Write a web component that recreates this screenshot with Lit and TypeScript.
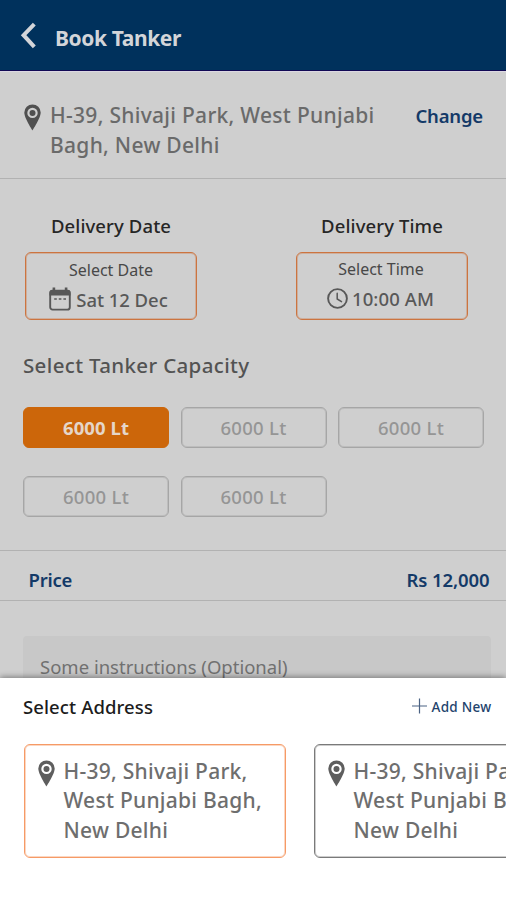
import { LitElement, html, css } from "lit";
import { customElement, property } from "lit/decorators.js";

const pin = html`<svg class="pin" width="17" height="27" viewBox="0 0 17 27">
  <path fill="currentColor" fill-rule="evenodd" d="M8.500 .4A8.2 8.2 0 0 0 .3 8.600C.3 14.200 8.500 26.400 8.500 26.400S16.700 14.200 16.700 8.600A8.2 8.2 0 0 0 8.500 .4ZM8.500 3.700a5.200 5.200 0 1 1 0 10.400a5.200 5.200 0 0 1 0-10.400Z"/>
  <circle cx="8.500" cy="8.900" r="3" fill="currentColor"/>
</svg>`;

const calendar = html`<svg width="22" height="24" viewBox="0 0 22 24">
  <rect x="1.200" y="4" width="19.600" height="18.600" rx="2.400" fill="none" stroke="currentColor" stroke-width="1.900"/>
  <path fill="currentColor" d="M.5 8.500V5.500Q.5 2.800 3.200 2.800H3.600V.5h2.600V2.800h9.600V.5H18.400V2.800h.4Q21.500 2.800 21.500 5.500V8.500Z"/>
  <path stroke="currentColor" stroke-width="1.600" stroke-dasharray="2.600 2" d="M5.200 12h12"/>
</svg>`;

const clock = html`<svg width="21" height="21" viewBox="0 0 21 21" fill="none" stroke="currentColor" stroke-linecap="round">
  <circle cx="10.500" cy="10.500" r="9.400" stroke-width="1.900"/>
  <path stroke-width="1.500" d="M10.200 5.200v5.800l4.300 2.600"/>
</svg>`;

@customElement("address-card")
class AddressCard extends LitElement {
  @property({ type: Boolean, reflect: true }) selected = false;
  static styles = css`
    :host { display: flex; box-sizing: border-box; flex: none; width: 262px; height: 114px; padding: 11.5px 0 0 12.5px;
      border: 1px solid #7a7a7a; border-radius: 6px; color: #6e6e6e; box-shadow: inset 0 0 0 1px rgba(112, 112, 112, .35); }
    :host([selected]) { border-color: #f69a66; box-shadow: inset 0 0 0 1px rgba(246, 154, 102, .4); }
    .pin { flex: none; margin: 3px 9px 0 0; color: #5e5e5e; }
    .text { font-size: 21px; font-weight: 500; line-height: 29.5px; letter-spacing: .26px; white-space: nowrap; }
  `;
  render() {
    return html`${pin}<div class="text">H-39, Shivaji Park,<br>West Punjabi Bagh,<br>New Delhi</div>`;
  }
}

@customElement("app-root")
class AppRoot extends LitElement {
  static styles = css`
    :host { display: flex; flex-direction: column; width: 506px; height: 900px; overflow: hidden; background: #fff;
      font-family: "Noto Sans", "Open Sans", sans-serif; font-weight: 500; white-space: nowrap; }
    .page { height: 678px; flex: none; overflow: hidden; background: #cfcfcf; }
    header { display: flex; align-items: center; height: 71px; box-sizing: border-box; padding: 3px 0 0 20px;
      background: #00315c; border-bottom: 1px solid #120a54; color: #d3d5d9; }
    .back { margin: -2px 18px 0 0; }
    .title { font-size: 21px; font-weight: 700; letter-spacing: -.39px; line-height: 30px; padding-top: 2px; }
    .place { display: flex; box-sizing: border-box; height: 108px; padding: 29px 0 0 24px; border-top: 1px solid #dcd8e2;
      border-bottom: 1px solid #b2b2b2; color: #6a6a6a; }
    .place .pin { margin: 3px 9px 0 0; color: #505050; }
    .where { width: 365.5px; font-size: 21px; line-height: 29.5px; letter-spacing: .29px; }
    .change { font-size: 18.5px; font-weight: 600; line-height: 30px; letter-spacing: -.19px; color: #143a68; }
    .slots { display: flex; justify-content: space-between; padding: 35px 38px 0 25px; }
    .slot { width: 172px; text-align: center; }
    .label { font-size: 18.5px; line-height: 24px; letter-spacing: .11px; color: #262626; margin-bottom: 14px; }
    .pick { box-sizing: border-box; height: 68px; border: 1px solid #cc7440; border-radius: 6px; padding-top: 7px;
      box-shadow: inset 0 0 0 1px rgba(204, 116, 64, .35); }
    .pick.time { padding-top: 6px; }
    .hint { font-size: 16px; font-weight: 400; line-height: 20px; color: #484848; }
    .time .hint { padding-right: 2px; }
    .value { display: flex; align-items: center; justify-content: center; gap: 5px; height: 24px; margin-top: 7px;
      font-size: 18.5px; color: #585858; letter-spacing: -.05px; padding-right: 5px; }
    .time .value { gap: 4px; letter-spacing: .09px; padding-right: 3px; }
    .heading { padding: 31px 0 0 23px; font-size: 20.5px; line-height: 28px; letter-spacing: .35px; color: #535353; }
    .sizes { display: grid; grid-template-columns: repeat(3, 146px); gap: 27.5px 11.500px; padding: 28px 0 0 23px; }
    .size { box-sizing: border-box; height: 41px; border: 1px solid #a6a6a6; border-radius: 6px; color: #959595;
      font-size: 18.5px; line-height: 39px; text-align: center; letter-spacing: .27px; box-shadow: inset 0 0 0 1px rgba(150, 150, 150, .3); }
    .size.on { background: #cc660a; border-color: #cc660a; color: #e5d6c9; font-weight: 700; letter-spacing: .07px; box-shadow: none; }
    .price { display: flex; justify-content: space-between; box-sizing: border-box; height: 51px; margin-top: 33px; padding: 16px 16.5px 0 28.5px;
      border-top: 1px solid #b2b2b2; border-bottom: 1px solid #b2b2b2; font-size: 18.5px; font-weight: 600; line-height: 26px; color: #143a68; }
    .price .name { letter-spacing: -.25px; }
    .price .sum { letter-spacing: -.1px; }
    .note { margin: 35px 15px 0 23px; height: 80px; padding: 17px 0 0 17px; border-radius: 4px; background: #c8c8c8;
      font-size: 18.5px; font-weight: 400; line-height: 28px; color: #717171; }
    .sheet { position: relative; flex: 1; background: #fff; box-shadow: 0 -1px 6px rgba(0, 0, 0, .42); }
    .bar { display: flex; justify-content: space-between; align-items: center; height: 28px; padding: 14px 14.5px 0 23px; }
    .caption { font-size: 18.5px; letter-spacing: .11px; color: #1c1c1c; }
    .add { display: flex; align-items: center; gap: 4.5px; padding-top: 1px; font-size: 13.5px; letter-spacing: .29px; color: #23436c; }
    .add svg { margin-top: -2px; }
    .cards { display: flex; gap: 28px; padding: 24px 0 0 24px; overflow: hidden; }
  `;
  render() {
    return html`
      <div class="page">
        <header>
          <svg class="back" width="17" height="27" viewBox="0 0 17 27"><path d="M14.300 2.200 3.600 13.200l10.700 11.600" fill="none" stroke="currentColor" stroke-width="4"/></svg>
          <div class="title">Book Tanker</div>
        </header>
        <section class="place">${pin}<div class="where">H-39, Shivaji Park, West Punjabi<br>Bagh, New Delhi</div><div class="change">Change</div></section>
        <section class="slots">
          <div class="slot"><div class="label">Delivery Date</div>
            <div class="pick"><div class="hint">Select Date</div><div class="value">${calendar}<span>Sat 12 Dec</span></div></div></div>
          <div class="slot"><div class="label">Delivery Time</div>
            <div class="pick time"><div class="hint">Select Time</div><div class="value">${clock}<span>10:00 AM</span></div></div></div>
        </section>
        <div class="heading">Select Tanker Capacity</div>
        <div class="sizes">${[0, 1, 2, 3, 4].map(i => html`<div class="size ${i === 0 ? "on" : ""}">6000 Lt</div>`)}</div>
        <div class="price"><span class="name">Price</span><span class="sum">Rs 12,000</span></div>
        <div class="note">Some instructions (Optional)</div>
      </div>
      <div class="sheet">
        <div class="bar"><span class="caption">Select Address</span>
          <span class="add"><svg width="15" height="16" viewBox="0 0 15 16"><path d="M7.500 .5v15M0 8h15" stroke="#4b6283" stroke-width="1.200"/></svg>Add New</span></div>
        <div class="cards"><address-card selected></address-card><address-card></address-card></div>
      </div>`;
  }
}
